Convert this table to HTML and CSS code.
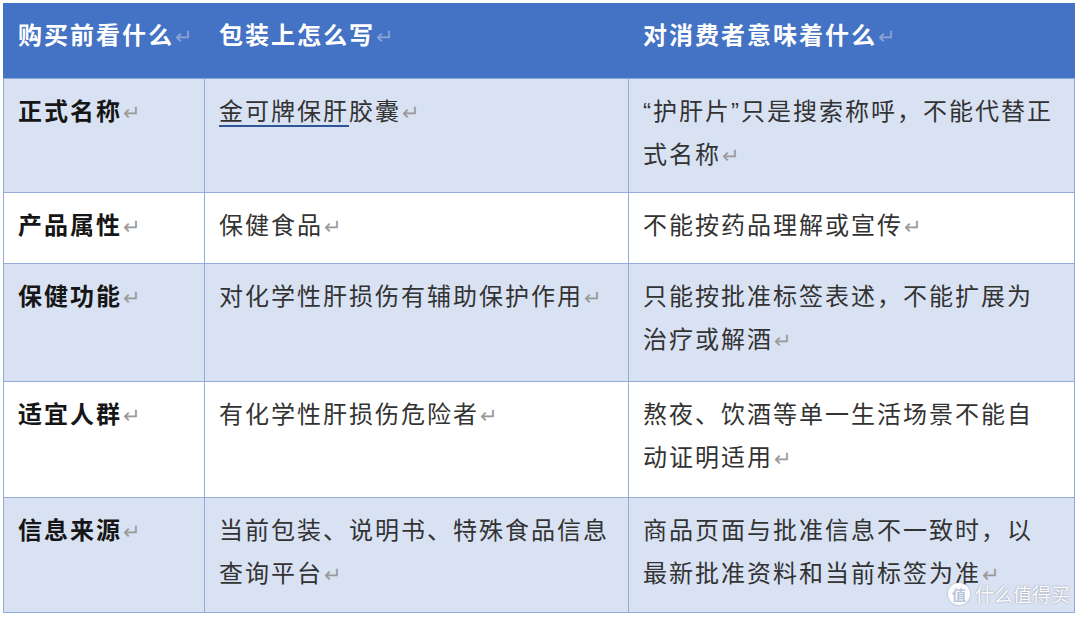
FILE: index.html
```html
<!DOCTYPE html>
<html lang="zh-CN">
<head>
<meta charset="utf-8">
<title>购买前看什么</title>
<link rel="stylesheet" href="styles.css">
</head>
<body>
<div class="page">
  <table class="grid">
    <colgroup>
      <col class="c1">
      <col class="c2">
      <col class="c3">
    </colgroup>
    <thead>
      <tr>
        <th>购买前看什么<span class="pm">↵</span></th>
        <th>包装上怎么写<span class="pm">↵</span></th>
        <th class="last">对消费者意味着什么<span class="pm">↵</span></th>
      </tr>
    </thead>
    <tbody>
      <tr class="tint">
        <td class="key">正式名称<span class="pm">↵</span></td>
        <td><span class="link">金可牌保肝</span>胶囊<span class="pm">↵</span></td>
        <td class="last">“护肝片”只是搜索称呼，不能代替正式名称<span class="pm">↵</span></td>
      </tr>
      <tr>
        <td class="key">产品属性<span class="pm">↵</span></td>
        <td>保健食品<span class="pm">↵</span></td>
        <td class="last">不能按药品理解或宣传<span class="pm">↵</span></td>
      </tr>
      <tr class="tint loose-3">
        <td class="key">保健功能<span class="pm">↵</span></td>
        <td>对化学性肝损伤有辅助保护作用<span class="pm">↵</span></td>
        <td class="last">只能按批准标签表述，不能扩展为治疗或解酒<span class="pm">↵</span></td>
      </tr>
      <tr class="loose-2">
        <td class="key">适宜人群<span class="pm">↵</span></td>
        <td>有化学性肝损伤危险者<span class="pm">↵</span></td>
        <td class="last">熬夜、饮酒等单一生活场景不能自动证明适用<span class="pm">↵</span></td>
      </tr>
      <tr class="tint loose-1">
        <td class="key">信息来源<span class="pm">↵</span></td>
        <td>当前包装、说明书、特殊食品信息查询平台<span class="pm">↵</span></td>
        <td class="last">商品页面与批准信息不一致时，以最新批准资料和当前标签为准<span class="pm">↵</span></td>
      </tr>
    </tbody>
  </table>
  <div class="mark">
    <span class="mark-badge">值</span>
    <span class="mark-text">什么值得买</span>
  </div>
</div>
</body>
</html>
```

FILE: styles.css
```css
* {
  box-sizing: border-box;
}

html, body {
  margin: 0;
  padding: 0;
  background: #ffffff;
}

body {
  font-family: "Liberation Sans", "Noto Sans CJK SC", sans-serif;
  width: 1080px;
  height: 617px;
  overflow: hidden;
}

.page {
  position: relative;
  width: 1080px;
  height: 617px;
  padding: 3px 0 0 3px;
}

.grid {
  border-collapse: collapse;
  table-layout: fixed;
  width: 1071px;
  border: 1px solid #9fb5dc;
}

.c1 { width: 201px; }
.c2 { width: 424px; }
.c3 { width: 446px; }

.grid th,
.grid td {
  vertical-align: top;
  text-align: left;
  font-size: 24px;
  line-height: 43px;
  letter-spacing: 2px;
  padding: 11px 10px 15px 14px;
  border: 1px solid #93abd8;
}

.grid th.last,
.grid td.last {
  padding-right: 19px;
}

.grid tr.loose-3 td { padding-bottom: 19px; }
.grid tr.loose-2 td { padding-bottom: 17px; }
.grid tr.loose-1 td { padding-bottom: 16px; }

.grid th {
  background: #4472c4;
  color: #ffffff;
  font-weight: 700;
  padding-top: 10px;
  padding-bottom: 20px;
  border-color: #4472c4;
  border-bottom-color: #8aa5d6;
}

.grid td {
  color: #333333;
  background: #ffffff;
}

.grid tr.tint td {
  background: #d9e2f3;
}

.grid td.key {
  font-weight: 700;
  color: #161616;
}

.pm {
  color: #9a9a9a;
  font-weight: 400;
  font-size: 21px;
  letter-spacing: 0;
  margin-left: 1px;
}

.grid th .pm {
  color: #8aa3d4;
}

.link {
  text-decoration: underline;
  text-decoration-color: #2f5597;
  text-decoration-thickness: 2px;
  text-underline-offset: 5px;
}

.mark {
  position: absolute;
  right: 10px;
  bottom: 12px;
  display: flex;
  align-items: center;
  gap: 5px;
  color: rgba(255, 255, 255, 0.95);
  text-shadow: 0 0 2px rgba(0, 0, 0, 0.35);
  font-family: "Noto Sans CJK SC", sans-serif;
}

.mark-badge {
  width: 22px;
  height: 22px;
  border-radius: 50%;
  background: rgba(255, 255, 255, 0.9);
  box-shadow: 0 0 2px rgba(0, 0, 0, 0.3);
  color: #b8c4d8;
  text-shadow: none;
  font-size: 14px;
  line-height: 22px;
  text-align: center;
  font-weight: 700;
}

.mark-text {
  font-size: 19px;
  line-height: 22px;
  letter-spacing: 0;
}
```
